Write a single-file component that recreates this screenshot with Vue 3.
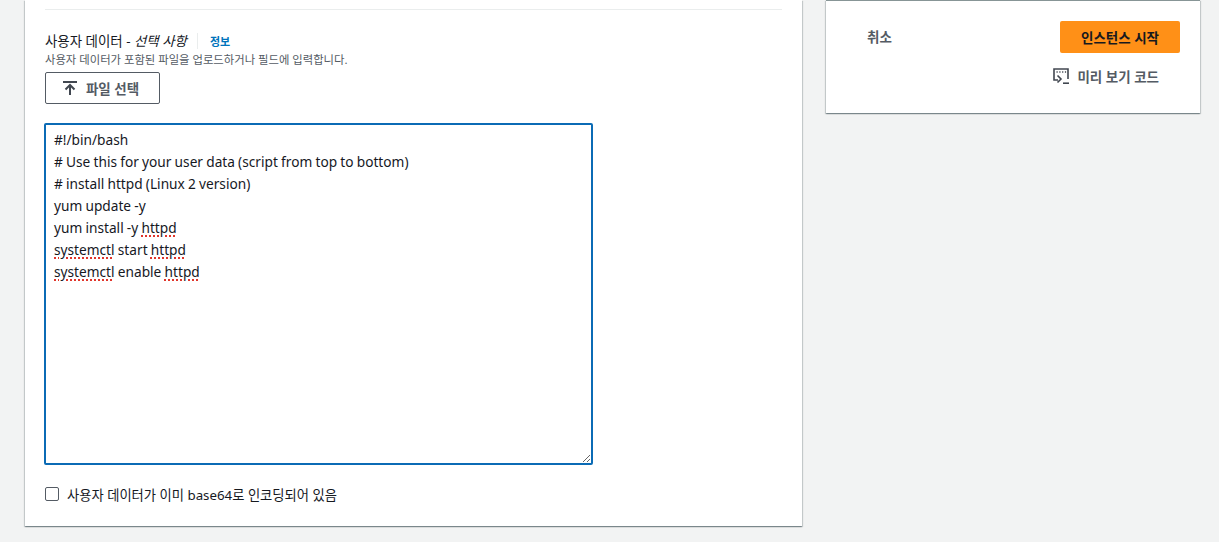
<script setup>
const lines = [
  [{ t: '#!/bin/bash' }],
  [{ t: '# Use this for your user data (script from top to bottom)' }],
  [{ t: '# install httpd (Linux 2 version)' }],
  [{ t: 'yum update -y' }],
  [{ t: 'yum install -y ' }, { t: 'httpd', bad: true }],
  [{ t: 'systemctl', bad: true }, { t: ' start ' }, { t: 'httpd', bad: true }],
  [{ t: 'systemctl', bad: true }, { t: ' enable ' }, { t: 'httpd', bad: true }],
]
</script>

<template>
  <div class="page">
    <main class="card form">
      <div class="divider"></div>
      <div class="label-row">
        <span class="label">사용자 데이터 - <i>선택 사항</i></span>
        <span class="sep"></span>
        <a class="info">정보</a>
      </div>
      <p class="desc">사용자 데이터가 포함된 파일을 업로드하거나 필드에 입력합니다.</p>
      <button class="upload" type="button">
        <svg width="16" height="16" viewBox="0 0 16 16" fill="none" stroke="#414750" stroke-width="2">
          <path d="M1 2h14M8 15V5M3.500 9.500 8 5l4.500 4.500" />
        </svg>
        <span>파일 선택</span>
      </button>
      <div class="area">
        <div v-for="(line, i) in lines" :key="i" class="line">
          <template v-for="(part, j) in line" :key="j"><span :class="{ bad: part.bad }">{{ part.t }}</span></template>
        </div>
      </div>
      <label class="check">
        <span class="box"></span>
        <span>사용자 데이터가 이미 base64로 인코딩되어 있음</span>
      </label>
    </main>
    <aside class="card side">
      <div class="actions">
        <span class="cancel">취소</span>
        <button class="launch" type="button">인스턴스 시작</button>
      </div>
      <div class="preview">
        <svg width="16" height="16" viewBox="0 0 16 16" fill="none" stroke="#414750" stroke-width="1.600">
          <path d="M5 12H1V1h14v10" />
          <path d="M3.500 4h1.200M6.300 4h1.200M9.100 4h1.200M11.900 4h1.200" stroke-width="1.500" />
          <path d="M4.500 7.500 8 11l-3.500 3.500" />
          <path d="M10 15.200h6" />
        </svg>
        <span>미리 보기 코드</span>
      </div>
    </aside>
  </div>
</template>

<style>
html, body { margin: 0; background: #f2f3f3; overflow: hidden; }
</style>

<style scoped>
.page {
  display: flex;
  align-items: flex-start;
  gap: 24px;
  height: 542px;
  padding-left: 25px;
  background: #f2f3f3;
  font-family: "Noto Sans", "Noto Sans CJK KR", sans-serif;
  color: #16191f;
}
.card {
  box-sizing: border-box;
  background: #fff;
  box-shadow: 0 1px 1px 0 rgba(0, 28, 36, 0.3), 1px 1px 1px 0 rgba(0, 28, 36, 0.15), -1px 1px 1px 0 rgba(0, 28, 36, 0.15);
}
.form {
  width: 777px;
  height: 526px;
  padding: 9px 20px 0;
}
.divider { height: 1px; background: #eaeded; }
.label-row {
  display: flex;
  align-items: center;
  height: 20px;
  margin-top: 21px;
}
.label { font-size: 13.450px; line-height: 20px; }
.label i { font-style: italic; }
.sep { width: 1px; height: 16px; margin: 0 12px 0 10px; background: #eaeded; }
.info { font-size: 11px; font-weight: 700; color: #0073bb; }
.desc {
  margin: 1px 0 0;
  font-size: 11.350px;
  line-height: 16px;
  color: #545b64;
}
.upload {
  display: flex;
  align-items: center;
  justify-content: center;
  gap: 8px;
  box-sizing: border-box;
  width: 115px;
  height: 32px;
  margin-top: 4px;
  padding: 0 4px 0 0;
  background: #fff;
  border: 1px solid #545b64;
  border-radius: 2px;
  font: 700 13.500px "Noto Sans", "Noto Sans CJK KR", sans-serif;
  color: #545b64;
}
.area {
  box-sizing: border-box;
  width: 549px;
  height: 342px;
  margin: 19px 0 0 -1px;
  padding: 4px 8px;
  border: 2px solid #0b6bb5;
  border-radius: 2px;
  overflow: auto;
  resize: both;
  font-size: 13.700px;
  word-spacing: -0.360px;
  line-height: 22px;
  white-space: pre;
}
.line { height: 22px; }
.bad {
  text-decoration: underline dotted #e0352b 2px;
  text-underline-offset: 2px;
}
.check {
  display: flex;
  align-items: center;
  gap: 8px;
  margin-top: 20px;
  height: 18px;
  font-size: 13.300px;
  color: #16191f;
}
.box {
  box-sizing: border-box;
  width: 14px;
  height: 14px;
  border: 1px solid #545b64;
  border-radius: 2px;
}
.side {
  width: 374px;
  height: 113px;
  padding: 20px 20px 0 41px;
  border-top: 1px solid #879596;
}
.actions {
  display: flex;
  justify-content: space-between;
  align-items: flex-start;
}
.cancel {
  font-size: 13.500px;
  font-weight: 700;
  line-height: 32px;
  color: #545b64;
}
.launch {
  box-sizing: border-box;
  width: 120px;
  height: 32px;
  padding: 0;
  background: #ff9017;
  border: 0;
  border-radius: 2px;
  font: 700 13.500px "Noto Sans", "Noto Sans CJK KR", sans-serif;
  color: #16191f;
}
.preview {
  display: flex;
  align-items: center;
  justify-content: flex-end;
  gap: 8px;
  height: 20px;
  margin-top: 13px;
  padding-right: 21px;
  font-size: 13.500px;
  font-weight: 700;
  color: #545b64;
}
</style>
